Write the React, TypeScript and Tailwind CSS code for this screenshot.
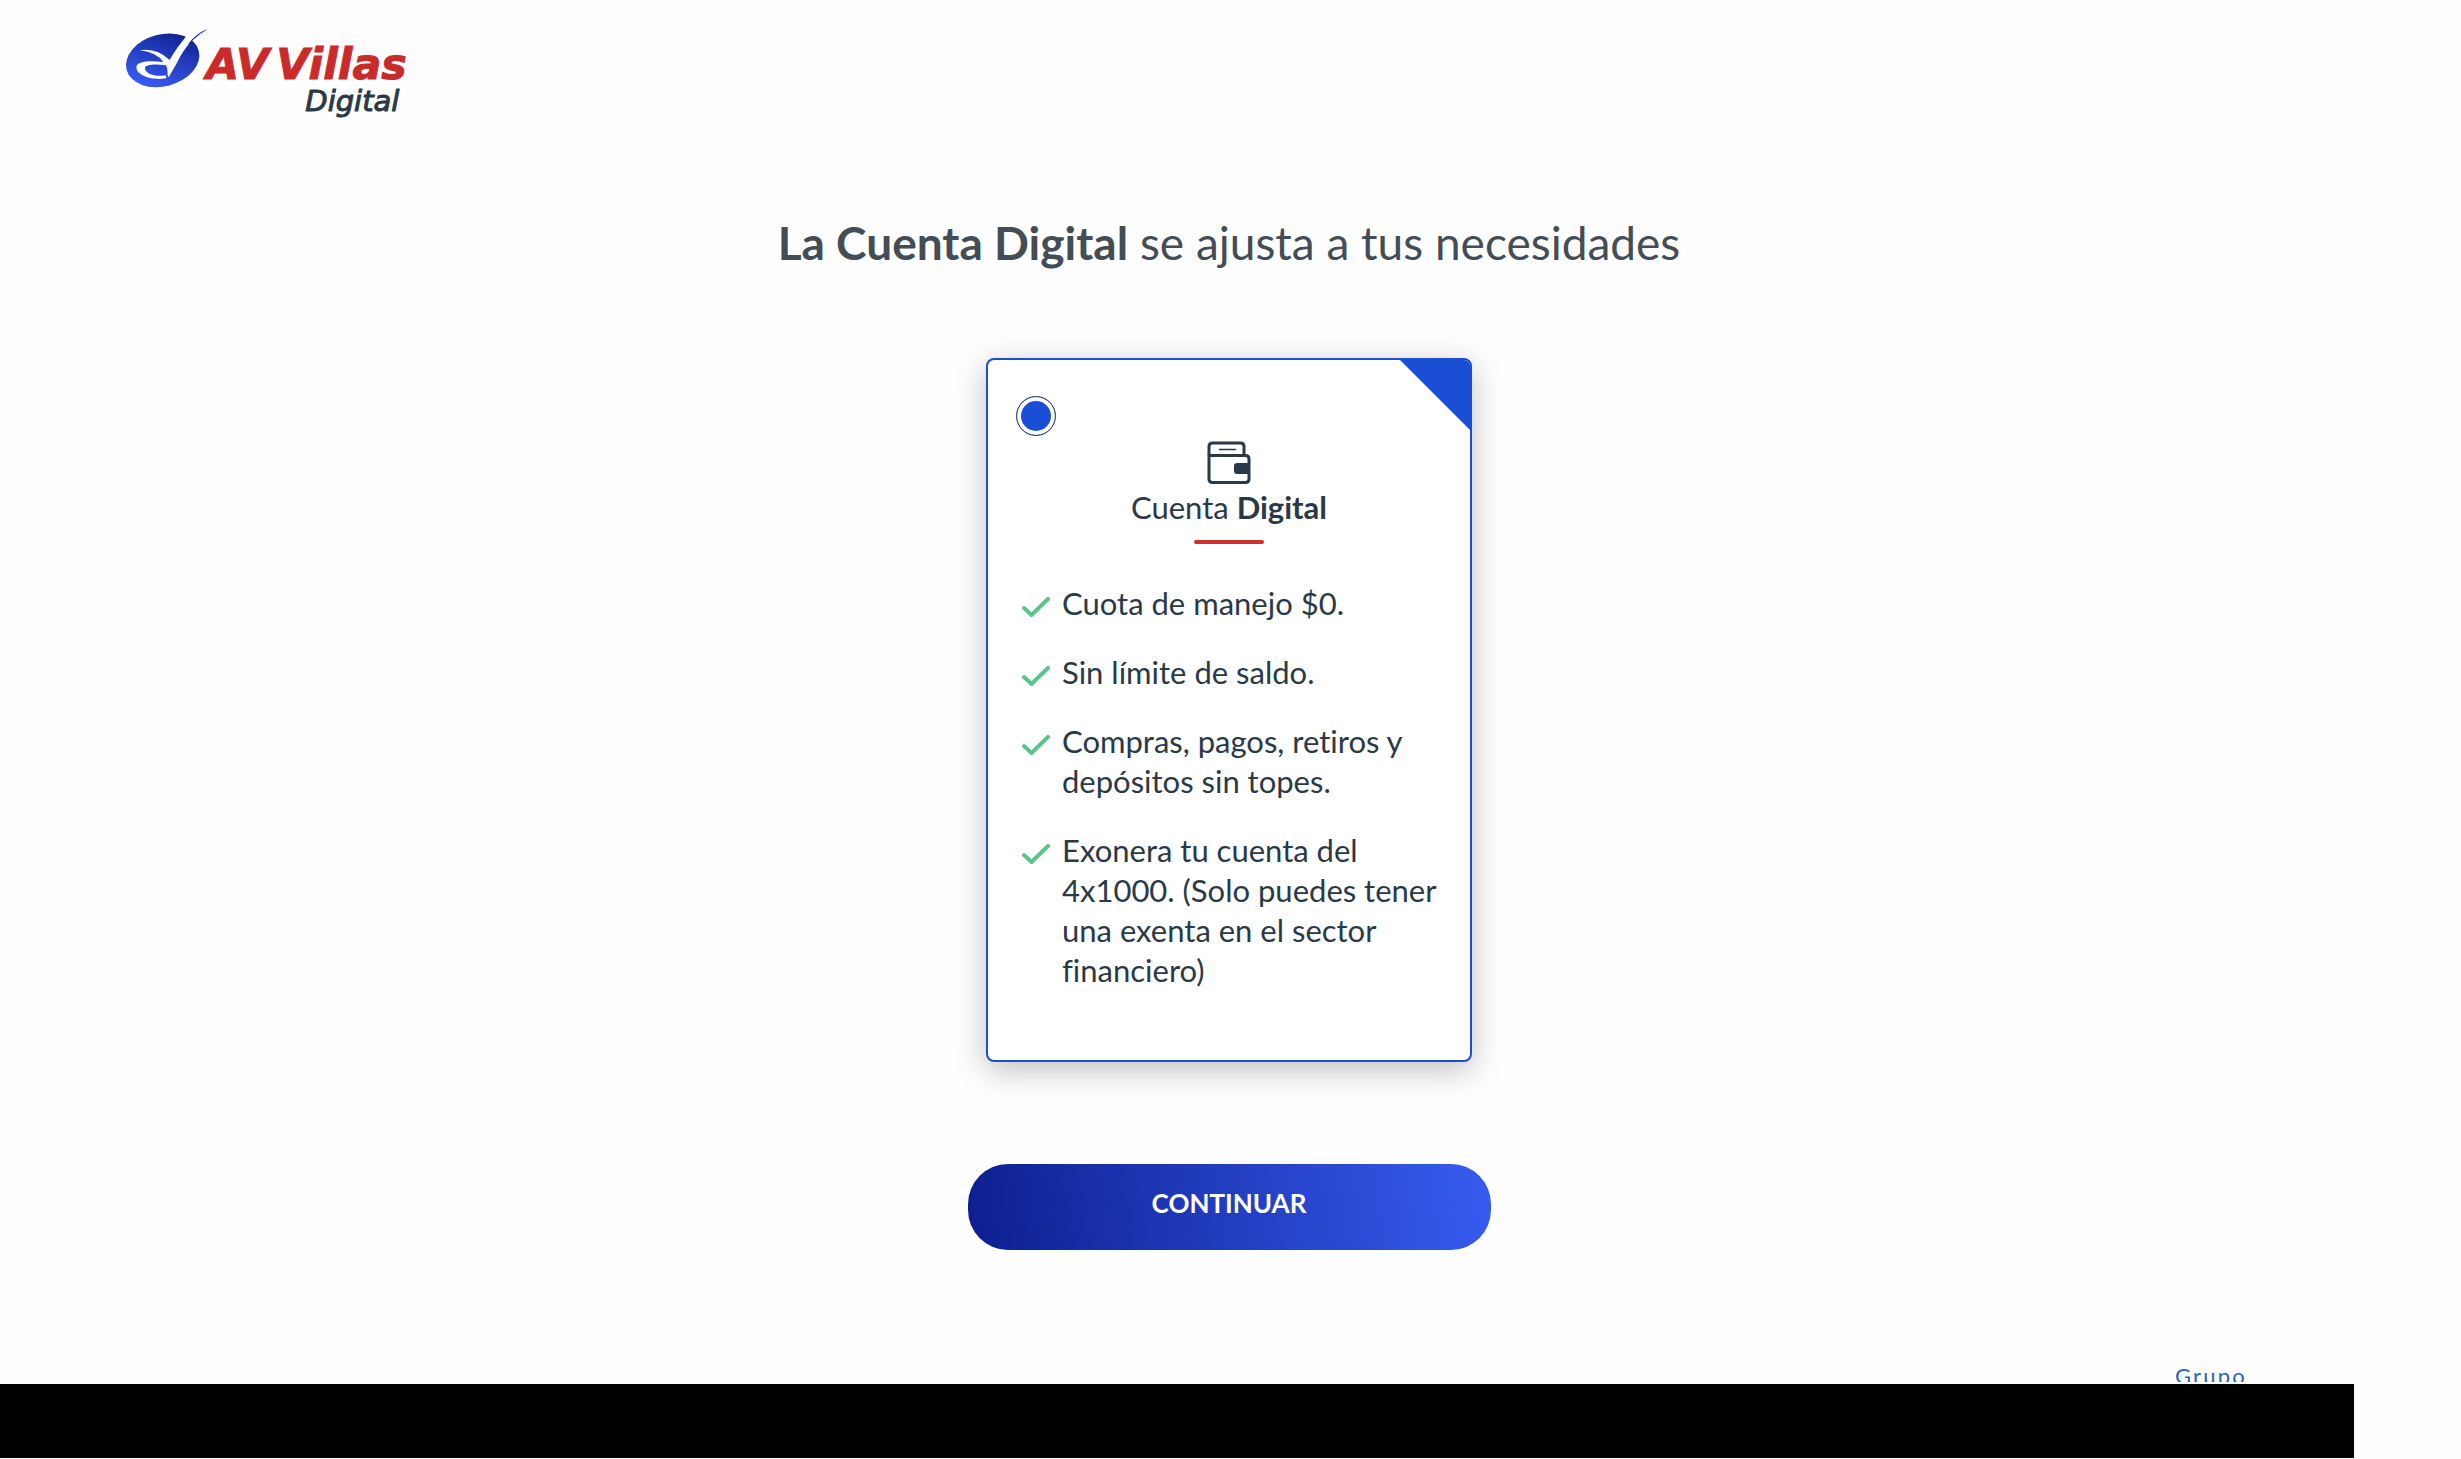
import React from "react";

const benefits = [
  "Cuota de manejo $0.",
  "Sin límite de saldo.",
  "Compras, pagos, retiros y depósitos sin topes.",
  "Exonera tu cuenta del 4x1000. (Solo puedes tener una exenta en el sector financiero)",
];

function Logo() {
  return (
    <svg viewBox="0 0 960 360" className="h-30 w-80" role="img" aria-label="AV Villas Digital">
      <defs>
        <linearGradient id="oval" x1="0" y1="1" x2="1" y2="0">
          <stop offset="0.1" stopColor="#3a60fa" />
          <stop offset="0.9" stopColor="#10218f" />
        </linearGradient>
      </defs>
      <ellipse cx="158" cy="136" rx="112" ry="78" transform="rotate(-15 158 136)" fill="url(#oval)" />
      <path d="M232 60 C210 86 192 112 179 135 Q139 98 90 106 Q140 112 160 141 C118 136 79 139 79 157 C79 182 130 199 170 189 L166 181 C133 187 103 174 105 158 C108 147 140 147 168 151 Q173 160 173 181 L176 187 L201 143 Q215 112 244 78 L262 50 Z" fill="#fff" />
      <path d="M234 88 Q260 52 294 42 Q268 56 248 76 L240 88 Z" fill="#18309f" />
      <g fontStyle="italic" fontFamily="'DejaVu Sans', sans-serif" strokeWidth="3">
        <g fill="#cb2a2a" stroke="#cb2a2a" fontSize="128" fontWeight="700">
          <text x="288" y="192">AV</text>
          <text x="499" y="192">Villas</text>
        </g>
        <text x="586" y="287" fill="#2a3947" stroke="#2a3947" fontSize="87">Digital</text>
      </g>
    </svg>
  );
}

function Wallet() {
  return (
    <svg viewBox="0 0 44 44" className="h-11 w-11" fill="none" stroke="#2a3947" strokeWidth="3" aria-hidden="true">
      <path d="M2 14V5.500Q2 2 5.500 2H33.500Q37 2 37 5.500V14" />
      <path d="M2 14.500H38.500Q42 14.500 42 18V38Q42 41.500 38.500 41.500H5.500Q2 41.500 2 38Z" />
      <path d="M12.500 8.500H28.500" strokeWidth="1.500" strokeLinecap="round" />
      <path d="M42 22H30Q27 22 27 25V30Q27 33 30 33H42Z" fill="#2a3947" stroke="none" />
    </svg>
  );
}

function Check() {
  return (
    <svg viewBox="0 0 28 20" className="mt-3.5 h-5 w-7 shrink-0" fill="none" stroke="#5ac58a" strokeWidth="4" strokeLinecap="round" aria-hidden="true">
      <path d="M2 11L9.500 18L26 2" />
    </svg>
  );
}

export default function App() {
  return (
    <div className="flex min-h-screen flex-col bg-[#fefefe] font-['Lato',sans-serif] text-[#2a3947]">
      <header className="px-[110px] pt-[15px]">
        <Logo />
      </header>
      <main className="flex flex-1 flex-col items-center pr-[3px]">
        <h1 className="mt-[78px] text-center text-[46px] leading-[60px] text-[#444d55]">
          <strong className="font-bold">La Cuenta Digital</strong> se ajusta a tus necesidades
        </h1>
        <label className="relative mt-[85px] flex w-[486px] max-w-full flex-col overflow-hidden rounded-lg border-2 border-[#194ed5] bg-white px-7 pt-9 pb-[70px] shadow-[0_8px_32px_rgba(0,0,0,0.25)]">
          <span className="absolute top-0 right-0 h-[70px] w-[70px] bg-[#194ed5] [clip-path:polygon(0_0,100%_0,100%_100%)]" />
          <input
            type="radio"
            name="cuenta"
            defaultChecked
            aria-label="Cuenta Digital"
            className="h-10 w-10 appearance-none rounded-full border border-[#2f4558] bg-[#194ed5] shadow-[inset_0_0_0_4px_white]"
          />
          <span className="mt-[5px] flex flex-col items-center">
            <Wallet />
            <span className="mt-0.5 text-[31px] leading-10">
              Cuenta <strong className="font-bold">Digital</strong>
            </span>
            <span className="mt-[13px] h-1 w-[70px] rounded-full bg-[#d32e2e]" />
          </span>
          <ul className="mt-[39px] flex flex-col gap-[29px] pl-1.5 text-[31px] leading-10 [font-variant-ligatures:none]">
            {benefits.map((text) => (
              <li key={text} className="flex gap-3">
                <Check />
                <span>{text}</span>
              </li>
            ))}
          </ul>
        </label>
        <button
          type="button"
          className="mt-[102px] h-[86px] w-[523px] max-w-full rounded-[40px] bg-linear-[80deg] from-[#0d1f8f] to-[#375cf0] pb-2 text-[26px] font-bold text-white"
        >
          CONTINUAR
        </button>
      </main>
      <footer className="mr-[107px]">
        <div className="mb-0.5 flex h-4 justify-end overflow-hidden pr-[107px] text-[22px] leading-5 tracking-widest text-[#2a62bd]">
          Grupo
        </div>
        <div className="mb-px h-[74px] bg-black" />
      </footer>
    </div>
  );
}
